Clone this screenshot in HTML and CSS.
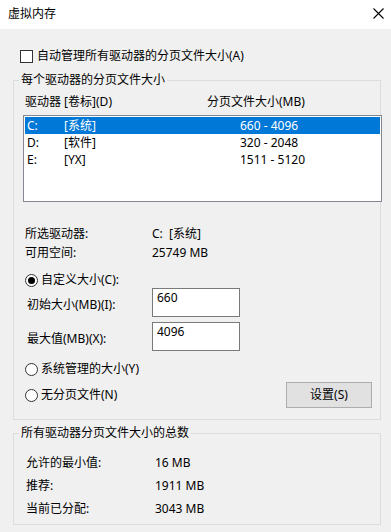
FILE: index.html
```html
<!DOCTYPE html>
<html lang="zh-CN">
<head>
    <meta charset="UTF-8">
    <title>虚拟内存</title>
    <link rel="stylesheet" href="styles.css">
</head>
<body>
    <div class="window">
        <div class="titlebar">
            <span class="title">虚拟内存</span>
            <svg class="close" width="11" height="11" viewBox="0 0 11 11">
                <path d="M0.5 0.5 L10.5 10.5 M10.5 0.5 L0.5 10.5" stroke="#000" stroke-width="1.1" fill="none"/>
            </svg>
        </div>

        <label class="check-row">
            <span class="checkbox"></span>
            自动管理所有驱动器的分页文件大小(A)
        </label>

        <fieldset class="group group-drives">
            <legend>每个驱动器的分页文件大小</legend>

            <div class="list-header">
                <span>驱动器 [卷标](D)</span>
                <span>分页文件大小(MB)</span>
            </div>

            <div class="listbox">
                <div class="list-row selected"><span>C:</span><span>[系统]</span><span>660 - 4096</span></div>
                <div class="list-row"><span>D:</span><span>[软件]</span><span>320 - 2048</span></div>
                <div class="list-row"><span>E:</span><span>[YX]</span><span>1511 - 5120</span></div>
            </div>

            <div class="info">
                <span>所选驱动器:</span><span>C:&nbsp;&nbsp;[系统]</span>
                <span>可用空间:</span><span>25749 MB</span>
            </div>

            <label class="radio-row first">
                <span class="radio checked"></span>自定义大小(C):
            </label>

            <div class="size-row">
                <span class="size-label">初始大小(MB)(I):</span>
                <input class="size-input" type="text" value="660">
            </div>
            <div class="size-row">
                <span class="size-label">最大值(MB)(X):</span>
                <input class="size-input" type="text" value="4096">
            </div>

            <label class="radio-row managed">
                <span class="radio"></span>系统管理的大小(Y)
            </label>

            <div class="bottom-row">
                <label class="radio-row">
                    <span class="radio"></span>无分页文件(N)
                </label>
                <button type="button">设置(S)</button>
            </div>
        </fieldset>

        <fieldset class="group group-total">
            <legend>所有驱动器分页文件大小的总数</legend>
            <div class="totals">
                <span>允许的最小值:</span><span>16 MB</span>
                <span>推荐:</span><span>1911 MB</span>
                <span>当前已分配:</span><span>3043 MB</span>
            </div>
        </fieldset>
    </div>
</body>
</html>
```

FILE: styles.css
```css
* {
    box-sizing: border-box;
}

body {
    margin: 0;
    background-color: #f0f0f0;
    font-family: "Noto Sans", "Noto Sans CJK SC", sans-serif;
    font-size: 12px;
    line-height: 16px;
    color: #000;
}

.window {
    width: 391px;
    height: 532px;
    overflow: hidden;
}

/* title bar */
.titlebar {
    height: 29px;
    background-color: #fff;
    display: flex;
    align-items: center;
    justify-content: space-between;
    padding: 0 7px 1px 8px;
}

.close {
    margin-top: -1px;
}

/* auto manage checkbox */
.check-row {
    display: flex;
    align-items: center;
    gap: 4px;
    height: 16px;
    margin: 19px 0 0 20px;
}

.checkbox {
    width: 13px;
    height: 13px;
    border: 1px solid #333;
    background-color: #fff;
}

/* group boxes */
.group {
    margin: 8px 10px 0 13px;
    padding: 0 0 11px 0;
    border: 1px solid #dcdcdc;
    min-inline-size: 0;
}

.group legend {
    margin-left: 5px;
    padding: 0 2px;
    line-height: 16px;
}

.list-header {
    display: grid;
    grid-template-columns: 182px auto;
    margin-top: 6px;
    padding-left: 11px;
}

.listbox {
    height: 87px;
    margin: 5px -2px 0 9px;
    padding: 1px;
    border: 1px solid #828790;
    background-color: #fff;
}

.list-row {
    display: grid;
    grid-template-columns: 37px 176px auto;
    height: 17px;
    line-height: 17px;
    padding-left: 2px;
}

.list-row.selected {
    background-color: #0078d7;
    color: #fff;
}

.info {
    display: grid;
    grid-template-columns: 127px auto;
    grid-auto-rows: 19px;
    align-items: center;
    margin-top: 22px;
    padding-left: 11px;
}

/* radios */
.radio-row {
    display: flex;
    align-items: center;
    gap: 3px;
    height: 16px;
    padding-left: 11px;
}

.radio-row.first {
    margin-top: 10px;
}

.radio-row.managed {
    margin-top: 10px;
}

.radio {
    width: 13px;
    height: 13px;
    border: 1px solid #333;
    border-radius: 50%;
    background-color: #fff;
    display: flex;
    align-items: center;
    justify-content: center;
}

.radio.checked::after {
    content: "";
    width: 7px;
    height: 7px;
    border-radius: 50%;
    background-color: #000;
}

/* size inputs */
.size-row {
    display: flex;
    align-items: center;
    height: 29px;
    padding-left: 13px;
}

.size-row + .size-row {
    margin-top: 5px;
}

.size-label {
    width: 125px;
    padding-top: 4px;
}

.size-input {
    width: 88px;
    height: 29px;
    padding: 0 4px 10px;
    border: 1px solid #7a7a7a;
    background-color: #fff;
    font: inherit;
    color: #000;
    outline: none;
}

.bottom-row {
    display: flex;
    align-items: center;
    justify-content: space-between;
    margin-top: 5px;
    padding-right: 8px;
}

button {
    width: 86px;
    height: 26px;
    border: 1px solid #adadad;
    background-color: #e1e1e1;
    font: inherit;
    color: #000;
    padding: 0;
}

/* totals */
.group-total {
    margin-top: 5px;
    padding-bottom: 4px;
}

.totals {
    display: grid;
    grid-template-columns: 129px auto;
    grid-auto-rows: 23px;
    align-items: center;
    margin-top: 10px;
    padding-left: 12px;
}
```
